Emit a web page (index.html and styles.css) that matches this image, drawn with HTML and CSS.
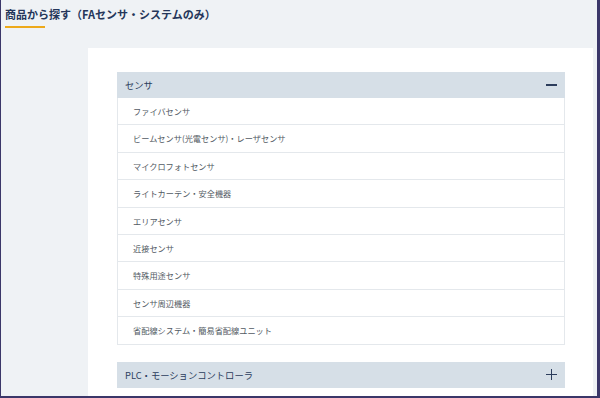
FILE: index.html
```html
<!DOCTYPE html>
<html lang="ja">
<head>
    <meta charset="UTF-8">
    <meta name="viewport" content="width=device-width, initial-scale=1.0">
    <title>商品から探す</title>
    <link rel="stylesheet" href="styles.css">
</head>
<body>
    <div class="frame">
        <h1 class="page-title">商品から探す（FAセンサ・システムのみ）</h1>

        <div class="card">
            <div class="accordion open">
                <div class="acc-head">
                    <span>センサ</span>
                    <span class="icon-minus"></span>
                </div>
                <ul class="acc-list">
                    <li>ファイバセンサ</li>
                    <li>ビームセンサ(光電センサ)・レーザセンサ</li>
                    <li>マイクロフォトセンサ</li>
                    <li>ライトカーテン・安全機器</li>
                    <li>エリアセンサ</li>
                    <li>近接センサ</li>
                    <li>特殊用途センサ</li>
                    <li>センサ周辺機器</li>
                    <li>省配線システム・簡易省配線ユニット</li>
                </ul>
            </div>

            <div class="accordion">
                <div class="acc-head">
                    <span>PLC・モーションコントローラ</span>
                    <span class="icon-plus"></span>
                </div>
            </div>
        </div>
    </div>
</body>
</html>
```

FILE: styles.css
```css
html, body {
    margin: 0;
    padding: 0;
}

body {
    font-family: "Noto Sans CJK JP", "Noto Sans", sans-serif;
    background-color: #eff2f5;
}

.frame {
    box-sizing: border-box;
    width: 600px;
    height: 398px;
    overflow: hidden;
    border-left: 1px solid #3b3769;
    border-right: 3px solid #3b3769;
    border-bottom: 2px solid #3b3769;
    padding: 0 4px 0 4px;
}

.page-title {
    display: inline-block;
    margin: 0;
    padding-top: 3px;
    font-size: 11px;
    line-height: 16px;
    font-weight: bold;
    color: #25365a;
}

.page-title::after {
    content: "";
    display: block;
    width: 40px;
    height: 2px;
    margin-top: 4px;
    background-color: #eda91a;
}

.card {
    background-color: white;
    margin: 20px 0 0 83px;
    padding: 24px 28px 0 29px;
    height: 360px;
}

.accordion {
    margin-bottom: 17px;
}

.acc-head {
    display: flex;
    justify-content: space-between;
    align-items: center;
    height: 26px;
    padding: 0 8px;
    background-color: #d6dfe7;
    color: #2c3d5c;
    font-size: 9.3px;
}

.icon-minus {
    width: 11px;
    height: 2px;
    background-color: #2c3d5c;
}

.icon-plus {
    width: 11px;
    height: 11px;
    position: relative;
}

.icon-plus::before,
.icon-plus::after {
    content: "";
    position: absolute;
    background-color: #2c3d5c;
}

.icon-plus::before {
    left: 0;
    top: 5px;
    width: 11px;
    height: 1px;
}

.icon-plus::after {
    left: 5px;
    top: 0;
    width: 1px;
    height: 11px;
}

.acc-list {
    list-style: none;
    margin: 0;
    padding: 0;
    border: 1px solid #e4e8ec;
    border-top: none;
}

.acc-list li {
    height: 26.4px;
    line-height: 26.4px;
    padding-left: 15px;
    font-size: 8.2px;
    color: #525a63;
    border-top: 1px solid #e4e8ec;
}

.acc-list li:first-child {
    border-top: none;
}
```
